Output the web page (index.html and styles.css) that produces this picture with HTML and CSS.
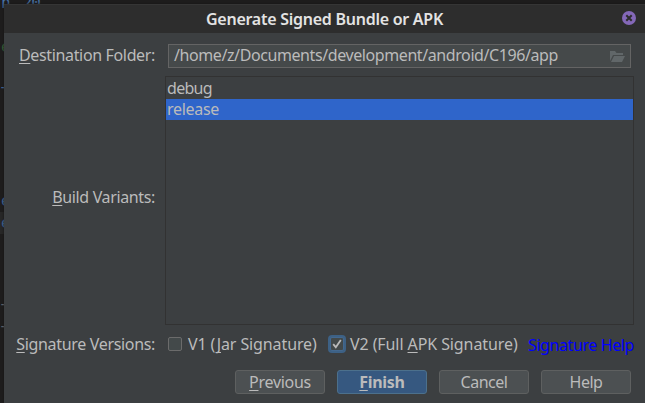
FILE: index.html
```
<!DOCTYPE html>
<html lang="en">
<head>
<meta charset="utf-8">
<title>Generate Signed Bundle or APK</title>
<link rel="stylesheet" href="styles.css">
</head>
<body>
<div class="editor" aria-hidden="true">
<div class="code-line first"><span>n</span><span class="num">20</span></div>
<div class="code-line"></div>
<div class="code-line green">e</div>
<div class="code-line"></div>
<div class="code-line blue-dash">T</div>
<div class="code-line"></div>
<div class="code-line"></div>
<div class="code-line"></div>
<div class="code-line"></div>
<div class="code-line">e</div>
<div class="code-line active">e</div>
<div class="code-line"></div>
<div class="code-line"></div>
<div class="code-line"></div>
<div class="code-line gray">T</div>
<div class="code-line gray">T</div>
</div>
<main class="dialog">
  <header class="titlebar">
    <h1 class="title">Generate Signed Bundle or APK</h1>
    <button class="close" aria-label="Close"><svg width="14" height="14" viewBox="0 0 14 14"><circle cx="7" cy="7" r="7" fill="#8468b8"/><path d="M4.3 4.3l5.4 5.4M9.7 4.3l-5.4 5.4" stroke="#2d2d2d" stroke-width="2"/></svg></button>
  </header>
  <div class="row folder">
    <label class="label l-dest"><u>D</u>estination Folder:</label>
    <div class="field">
      <span class="path">/home/z/Documents/development/android/C196/app</span>
      <svg class="folder-icon" width="15" height="12" viewBox="0 0 15 12"><path d="M0 10V0h5l1.5 2H13v2H3L0 10z" fill="#616769"/><path d="M4 5h11l-3 6H1z" fill="#616769"/></svg>
    </div>
  </div>
  <div class="row variants">
    <label class="label l-build"><u>B</u>uild Variants:</label>
    <ul class="list">
      <li><span class="t-debug">debug</span></li>
      <li class="selected"><span class="t-release">release</span></li>
    </ul>
  </div>
  <div class="row signatures">
    <label class="label l-sig"><u>S</u>ignature Versions:</label>
    <span class="check"></span>
    <span class="v1">V1 (<u>J</u>ar Signature)</span>
    <span class="check checked"><svg width="14" height="14" viewBox="0 0 14 14"><path d="M3.2 7.2l2.6 3L10.8 3" fill="none" stroke="#bbb" stroke-width="1.8"/></svg></span>
    <span class="v2">V2 (Full <u>A</u>PK Signature)</span>
    <a class="link">Signature Help</a>
  </div>
  <footer class="buttons">
    <button class="btn b-prev"><u>P</u>revious</button>
    <button class="btn primary"><u>F</u>inish</button>
    <button class="btn b-cancel">Cancel</button>
    <button class="btn b-help">Help</button>
  </footer>
</main>
</body>
</html>
```
FILE: styles.css
```
* { box-sizing: border-box; }
body {
  margin: 0;
  width: 645px;
  height: 403px;
  overflow: hidden;
  position: relative;
  background: #1f1e1e;
  color: #bbb;
  font: 16px/22px "Noto Sans", "Open Sans", sans-serif;
  white-space: nowrap;
}
u { text-decoration: underline; text-decoration-thickness: 1px; text-underline-offset: 2px; text-decoration-skip-ink: none; }
.editor {
  position: absolute;
  top: -8px;
  left: 0;
  width: 645px;
  font: 16px/22px "DejaVu Sans Mono", monospace;
  color: #4a74a8;
}
.code-line { height: 22px; padding-left: 1px; }
.num { margin-left: 12px; letter-spacing: -1px; }
.green { color: #3d6b3c; }
.gray { color: #72757b; }
.blue-dash { line-height: 28px; }
.active { background: #292929; }
.dialog {
  position: relative;
  margin: 4px 0 0 4px;
  width: 641px;
  height: 399px;
  background: #3c3f41;
  box-shadow: 0 0 4px #151515;
}
.titlebar {
  display: flex;
  align-items: center;
  height: 29px;
  padding: 0 9px 0 202px;
  background: #2d2d2d;
  border-top: 1px solid #353535;
}
.title { margin: 0; flex: 1; font-size: 16px; font-weight: 600; color: #e3e3e3; letter-spacing: -0.26px; }
.close { display: block; width: 14px; height: 14px; padding: 0; border: 0; background: none; line-height: 0; margin-top: -3px; }
.row { display: flex; align-items: center; }
.label { width: 151px; text-align: right; flex: none; }
.l-dest { letter-spacing: -0.35px; margin-top: -2px; }
.l-build { letter-spacing: -0.36px; margin-top: -7px; }
.l-sig { letter-spacing: -0.33px; }
.folder { height: 24px; margin-top: 11px; }
.field {
  display: flex;
  align-items: center;
  justify-content: space-between;
  width: 463px;
  height: 24px;
  margin-left: 13px;
  padding: 0 5px;
  background: #45494a;
  border: 1px solid #646464;
}
.path { letter-spacing: -0.41px; margin-top: -2px; }
.folder-icon { margin-top: 1px; }
.variants { height: 249px; margin-top: 8px; }
.list {
  width: 469px;
  height: 249px;
  margin: 0 0 0 10px;
  padding: 1px 0;
  border: 1px solid #323232;
  list-style: none;
}
.list li { height: 21px; line-height: 21px; padding-left: 1px; }
.list .selected { background: #2f65ca; }
.t-debug { letter-spacing: -0.7px; }
.t-release { letter-spacing: -0.3px; }
.signatures { height: 22px; margin-top: 8px; }
.check { width: 14px; height: 14px; margin: 0 6px 0 13px; border: 1px solid #6b6b6b; border-radius: 2px; background: #43494a; flex: none; }
.checked { margin: 0 6px 0 13px; border-color: #43688f; box-shadow: 0 0 0 2px #3d6185; }
.checked svg { display: block; margin: -1px; }
.v1 { width: 129px; letter-spacing: -0.11px; }
.v2 { width: 168px; letter-spacing: -0.09px; }
.link { color: #00f; margin-left: 10px; position: relative; top: 1px; letter-spacing: -0.4px; }
.buttons { display: flex; gap: 12px; margin: 15px 0 0 231px; }
.btn {
  width: 90px;
  height: 24px;
  padding: 0;
  border: 1px solid #5e6060;
  border-radius: 3px;
  background: #4c5052;
  color: #bbb;
  font: inherit;
  line-height: 20px;
  letter-spacing: -0.3px;
}
.b-cancel, .b-help { letter-spacing: -0.5px; }
.primary { background: #365880; border-color: #4c708c; font-weight: 700; }
```
